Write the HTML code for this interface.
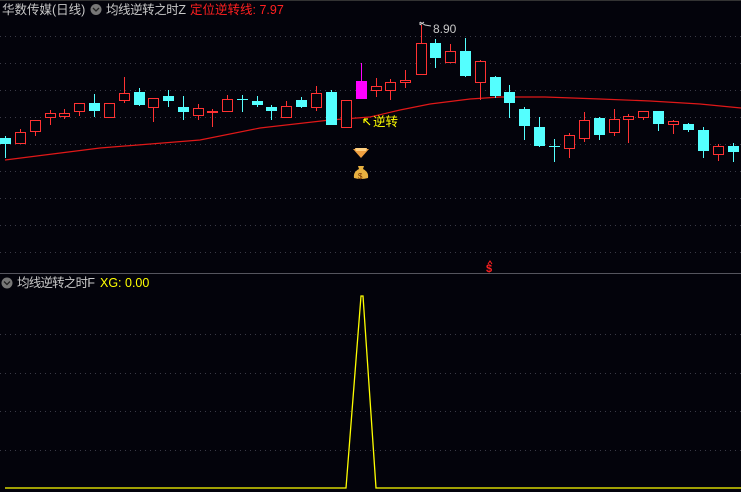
<!DOCTYPE html>
<html><head><meta charset="utf-8"><style>
html,body{margin:0;padding:0;background:#03030b;width:741px;height:492px;overflow:hidden}
svg{display:block}
text{font-family:"Liberation Sans","Noto Sans CJK SC",sans-serif}
</style></head><body>
<svg id="s" width="741" height="492" viewBox="0 0 741 492" xmlns="http://www.w3.org/2000/svg">
<rect width="741" height="492" fill="#03030b"/>
<g id="grid" stroke="#3a3a46" stroke-dasharray="1 4" stroke-width="1"></g>
<line x1="0" y1="273.5" x2="741" y2="273.5" stroke="#55555e"/>
<line x1="0" y1="0.5" x2="741" y2="0.5" stroke="#333"/>
<polyline fill="none" stroke="#e01818" stroke-width="1.2" points="5,160 100,148 200,140 260,128 330,120 370,117 400,110 430,104 470,99 500,97 545,97 600,99 650,101 700,104 741,108"/>
<g id="c"></g>
<polyline fill="none" stroke="#ffff00" stroke-width="1.3" points="5,488 346,488 361,296 363,296 376,488 741,488"/>
<text x="2" y="14" font-size="12.5" fill="#c8c8c8">华数传媒(日线)</text>
<circle cx="96" cy="9.5" r="5.5" fill="#777"/><path d="M93,8 l3,3 l3,-3" stroke="#222" fill="none" stroke-width="1.3"/>
<text x="106" y="14" font-size="12.5" fill="#c8c8c8" textLength="80">均线逆转之时Z</text>
<text x="190" y="14" font-size="12.5" fill="#ff2020">定位逆转线: 7.97</text>
<circle cx="7" cy="283" r="5.5" fill="#777"/><path d="M4,281.5 l3,3 l3,-3" stroke="#222" fill="none" stroke-width="1.3"/>
<text x="17" y="287" font-size="12.5" fill="#c8c8c8" textLength="78">均线逆转之时F</text>
<text x="100" y="287" font-size="12.5" fill="#ffff00">XG: 0.00</text>
<path d="M420,25 l4,-3 M420,25 l0,-3 M420,22 l5,3 l6,1" stroke="#ccc" fill="none" stroke-width="1"/>
<text x="433" y="33" font-size="12" fill="#c8c8c8">8.90</text>
<path d="M370,125 l-6,-6 M364,119 l0,4 M364,119 l4,0" stroke="#ffff00" stroke-width="1.2" fill="none"/>
<text x="373" y="126" font-size="12.5" fill="#ffff00">逆转</text>
<path d="M353,149 l16,0 l-8,9 z" fill="#f0a040"/><path d="M355,148 l12,0 l-1,3 l-10,0z" fill="#ffd080"/>
<path d="M358,166 l6,0 l-1,3 q6,3 5,9 q-7,2 -14,0 q-1,-6 5,-9z" fill="#e8b040"/>
<text x="358" y="179" font-size="8" fill="#703000">$</text>
<text x="486" y="272" font-size="11" fill="#ff2020" font-weight="bold">$</text>
<path d="M488,264 l2,-3 l2,3" stroke="#ff2020" fill="none"/>
</svg>
<script>
var ns="http://www.w3.org/2000/svg",g=document.getElementById("grid"),c=document.getElementById("c");
[36,63,90,117,144,171,198,225,252,334,373,411,450].forEach(function(y){var l=document.createElementNS(ns,"line");l.setAttribute("x1",0);l.setAttribute("x2",741);l.setAttribute("y1",y+.5);l.setAttribute("y2",y+.5);g.appendChild(l);});
var d=[[5,'c',138,144,136,158],[20,'r',132,143,129,144],[35,'r',120,131,120,136],[50,'r',113,117,110,125],[64,'r',113,116,109,119],[79,'r',103,111,103,116],[94,'c',103,111,94,117],[109,'r',103,117,103,117],[124,'r',93,100,77,103],[139,'c',92,105,88,106],[153,'r',98,107,98,122],[168,'c',96,101,90,107],[183,'c',107,112,96,120],[198,'r',108,115,104,120],[212,'r',111,112,109,127],[227,'r',99,111,95,111],[242,'c',99,100,95,112],[257,'c',101,105,96,107],[271,'c',107,111,105,120],[286,'r',106,117,101,117],[301,'c',100,107,97,108],[316,'r',93,107,86,111],[331,'c',92,125,90,125],[346,'r',100,127,100,128],[361,'m',81,99,63,99],[376,'r',86,90,78,97],[390,'r',82,90,79,100],[405,'r',80,82,70,88],[421,'r',43,74,25,74],[435,'c',43,58,39,68],[450,'r',51,62,44,63],[465,'c',51,76,38,77],[480,'r',61,82,60,100],[495,'c',77,96,76,98],[509,'c',92,103,85,118],[524,'c',109,126,107,140],[539,'c',127,146,117,147],[554,'c',146,146,139,162],[569,'r',135,148,133,158],[584,'r',120,138,112,142],[599,'c',118,135,117,140],[614,'r',119,132,109,136],[628,'r',116,119,114,143],[643,'r',111,117,111,120],[658,'c',111,124,111,131],[673,'r',121,124,120,134],[688,'c',124,130,123,132],[703,'c',130,151,127,158],[718,'r',146,154,144,161],[733,'c',146,152,143,162]];
d.forEach(function(k){var x=k[0],t=k[1],col=t=='r'?'#ff3232':(t=='m'?'#ff00ff':'#54ffff');
var w=document.createElementNS(ns,"line");w.setAttribute("x1",x+.5);w.setAttribute("x2",x+.5);w.setAttribute("y1",k[4]);w.setAttribute("y2",k[5]);w.setAttribute("stroke",col);c.appendChild(w);
var r=document.createElementNS(ns,"rect");var h=Math.max(1,k[3]-k[2]);
if(t=='r'){r.setAttribute("x",x-4.5);r.setAttribute("y",k[2]+.5);r.setAttribute("width",10);r.setAttribute("height",h);r.setAttribute("fill","#03030b");r.setAttribute("stroke",col);}
else{r.setAttribute("x",x-5);r.setAttribute("y",k[2]);r.setAttribute("width",11);r.setAttribute("height",h);r.setAttribute("fill",col);}
c.appendChild(r);});
</script>
</body></html>
